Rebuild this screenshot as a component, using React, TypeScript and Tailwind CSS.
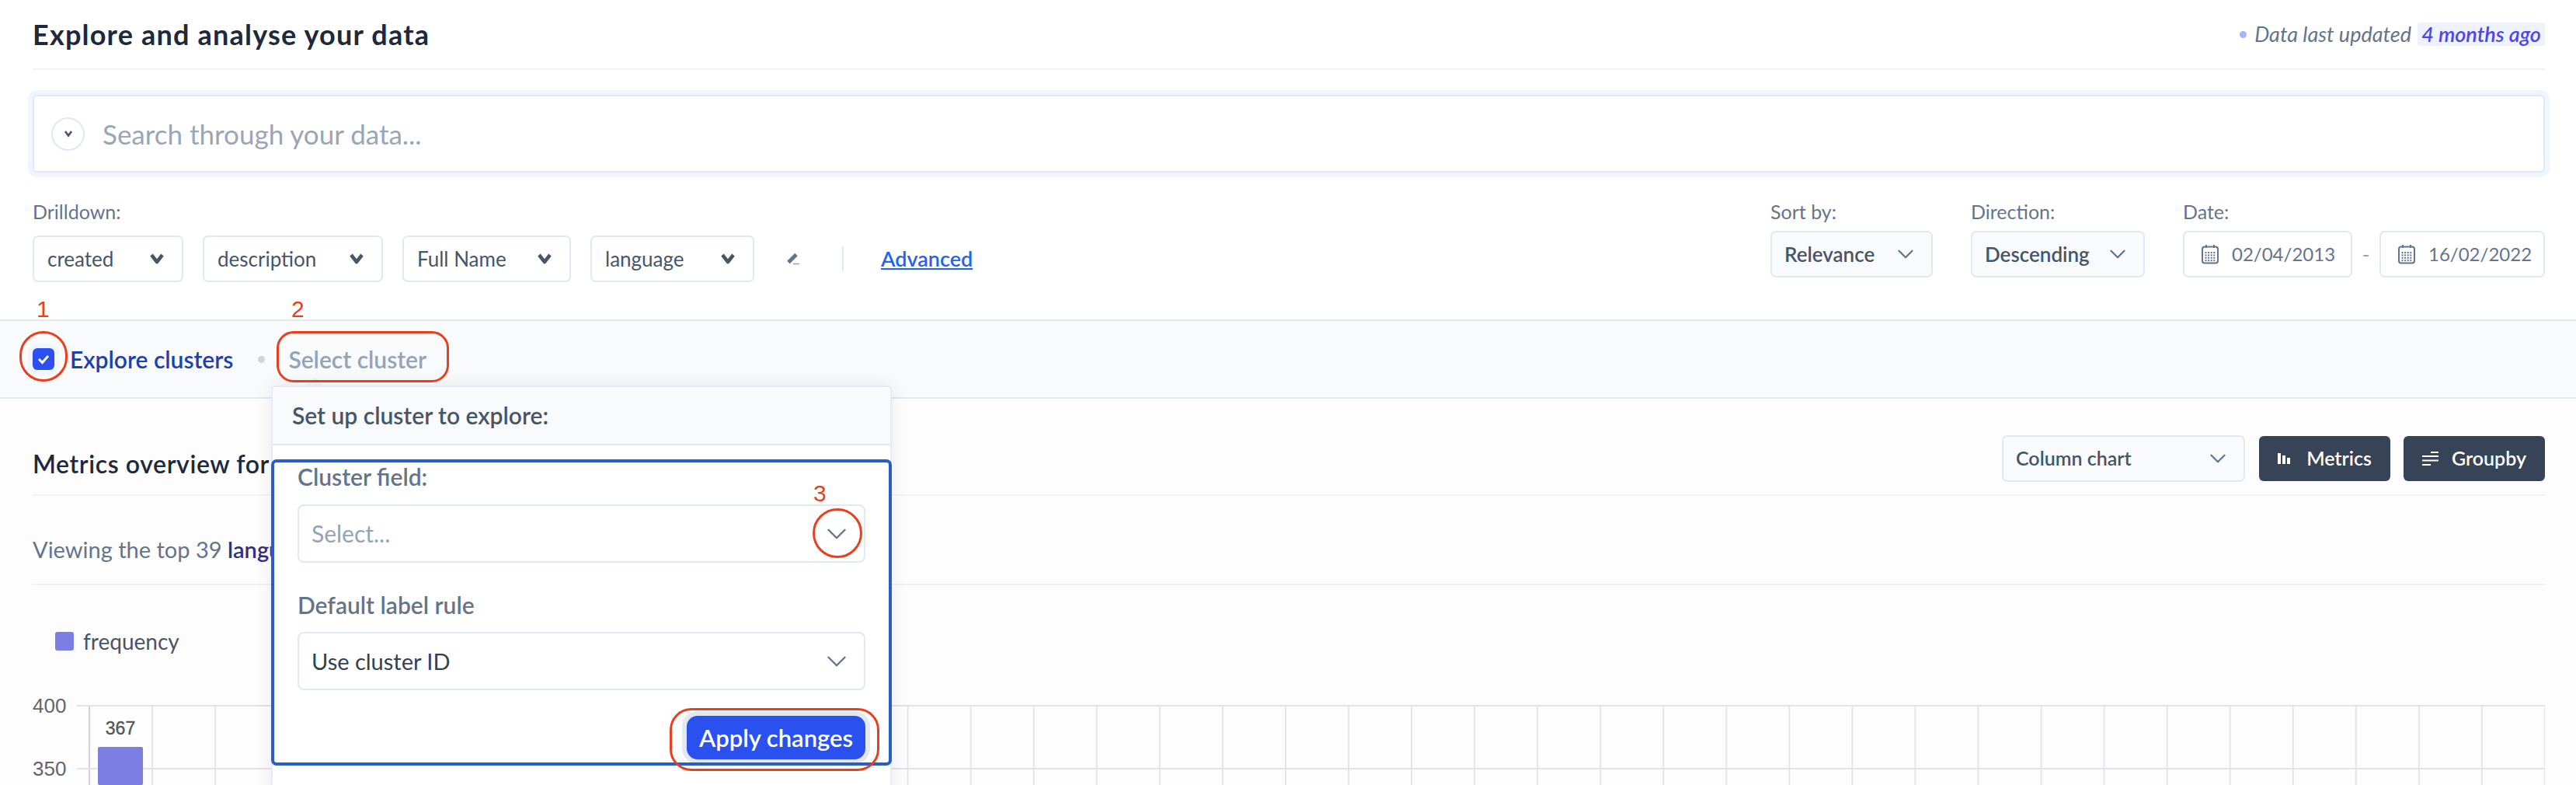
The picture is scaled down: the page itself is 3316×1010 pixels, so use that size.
import { ChevronDown } from 'lucide-react';

const DRILLDOWN = [
  { label: 'created', width: 'w-[194px]' },
  { label: 'description', width: 'w-[232px]' },
  { label: 'Full Name', width: 'w-[217px]' },
  { label: 'language', width: 'w-[211px]' },
];

function BoldChevron() {
  return (
    <svg width="20" height="16" viewBox="0 0 20 16" fill="none" className="shrink-0">
      <path d="M3 3 L10 12 L17 3" stroke="#475569" strokeWidth="4.5" strokeLinejoin="round" />
    </svg>
  );
}

function CalendarIcon() {
  const dots = [];
  for (let row = 0; row < 4; row++) {
    for (let col = 0; col < 4; col++) {
      dots.push(<rect key={`${row}-${col}`} x={5.5 + col * 3.6} y={10 + row * 3.4} width="2" height="2" fill="#64748b" />);
    }
  }
  return (
    <svg width="24" height="26" viewBox="0 0 24 26" fill="none" className="shrink-0">
      <rect x="2" y="3.5" width="20" height="21" rx="3" stroke="#64748b" strokeWidth="2" />
      <path d="M7 1 V5 M17 1 V5" stroke="#64748b" strokeWidth="2" />
      {dots}
    </svg>
  );
}

function DateBox({ value, width }: { value: string; width: string }) {
  return (
    <div className={`${width} h-[60px] flex items-center pl-[21px] gap-[16px] bg-white border-2 border-[#e2e8f0] rounded-[7px] text-[24px] text-[#64748b]`}>
      <CalendarIcon />
      <span>{value}</span>
    </div>
  );
}

function BarChart() {
  const verticals = Array.from({ length: 40 }, (_, i) => 73 + i * 81.05);
  return (
    <svg width="3234" height="150" viewBox="0 0 3234 150" className="block font-['Liberation_Sans',sans-serif]">
      {verticals.map((x, i) => (
        <line key={x} x1={x} y1="48" x2={x} y2="150" stroke={i === 0 ? '#cfd2d8' : '#e4e6ea'} strokeWidth="2" />
      ))}
      <line x1="57" y1="48" x2="3234" y2="48" stroke="#e1e3e8" strokeWidth="2" />
      <line x1="57" y1="129" x2="3234" y2="129" stroke="#e1e3e8" strokeWidth="2" />
      <text x="0" y="57" fontSize="26" fill="#666666">400</text>
      <text x="0" y="138" fontSize="26" fill="#666666">350</text>
      <rect x="84" y="101" width="58" height="49" rx="2" fill="#7c7ee3" />
      <text x="113" y="85" fontSize="23" stroke="#555555" strokeWidth="0.4" fill="#555555" textAnchor="middle">367</text>
    </svg>
  );
}

export default function App() {
  return (
    <div className="relative w-[3316px] h-[1010px] overflow-hidden bg-[#fdfdfe] font-['Lato',sans-serif]">
      <div className="bg-white">
        <div className="pl-[42px] pr-[40px]">
          <div className="h-[90px] flex items-center justify-between border-b-2 border-[#f1f3f7]">
            <h1 className="text-[36px] tracking-[1.2px] font-bold text-[#1e293b]">Explore and analyse your data</h1>
            <div className="flex items-center text-[27px] italic text-[#64748b]">
              <span className="w-[9px] h-[9px] mr-[10px] rounded-full bg-[#a5b4fc]" />
              <span>Data last updated</span>
              <span className="ml-[8px] w-[164px] h-[30px] flex items-center justify-center rounded-[3px] bg-[#eef2ff] font-semibold text-[#4f46e5]">4 months ago</span>
            </div>
          </div>

          <div className="mt-[32px] h-[100px] flex items-center pl-[22px] gap-[23px] bg-white border-2 border-[#e2e8f0] rounded-[6px] ring-[6px] ring-[#eff6ff]">
            <div className="w-[43px] h-[43px] flex items-center justify-center rounded-full border-2 border-[#e2e8f0]">
              <svg width="12" height="10" viewBox="0 0 12 10" fill="none">
                <path d="M2 2 L6 7.5 L10 2" stroke="#475569" strokeWidth="2.6" />
              </svg>
            </div>
            <span className="text-[35px] text-[#9aa5b8]">Search through your data...</span>
          </div>

          <div className="h-[189px] pt-[37px] flex justify-between items-start">
            <div>
              <div className="h-[26px] leading-[26px] text-[25px] text-[#64748b]">Drilldown:</div>
              <div className="mt-[18px] flex items-center">
                <div className="flex gap-[25px]">
                  {DRILLDOWN.map((item) => (
                    <div key={item.label} className={`${item.width} h-[60px] flex items-center justify-between pl-[17px] pr-[22px] bg-white border-2 border-[#e2e8f0] rounded-[7px] text-[26px] text-[#475569]`}>
                      <span>{item.label}</span>
                      <BoldChevron />
                    </div>
                  ))}
                </div>
                <svg width="18" height="18" viewBox="0 0 18 18" className="ml-[41px]">
                  <path d="M3 13.5 L13 3.5" stroke="#64748b" strokeWidth="5" />
                  <path d="M9 15.5 H17" stroke="#94a3b8" strokeWidth="1.6" />
                </svg>
                <div className="ml-[54px] w-[2px] h-[32px] bg-[#e2e8f0]" />
                <a className="ml-[48px] text-[27px] font-semibold text-[#2563eb] underline">Advanced</a>
              </div>
            </div>

            <div className="flex items-start">
              <div className="mr-[49px]">
                <div className="h-[26px] leading-[26px] text-[25px] text-[#64748b]">Sort by:</div>
                <div className="mt-[12px] w-[209px] h-[60px] flex items-center justify-between pl-[16px] pr-[16px] bg-[#f8fafc] border-2 border-[#e2e8f0] rounded-[7px] text-[26px] font-semibold text-[#475569]">
                  <span>Relevance</span>
                  <ChevronDown size={34} color="#64748b" strokeWidth={1.6} />
                </div>
              </div>
              <div className="mr-[49px]">
                <div className="h-[26px] leading-[26px] text-[25px] text-[#64748b]">Direction:</div>
                <div className="mt-[12px] w-[224px] h-[60px] flex items-center justify-between pl-[16px] pr-[16px] bg-[#f8fafc] border-2 border-[#e2e8f0] rounded-[7px] text-[26px] font-semibold text-[#475569]">
                  <span>Descending</span>
                  <ChevronDown size={34} color="#64748b" strokeWidth={1.6} />
                </div>
              </div>
              <div>
                <div className="h-[26px] leading-[26px] text-[25px] text-[#64748b]">Date:</div>
                <div className="mt-[12px] flex items-center">
                  <DateBox value="02/04/2013" width="w-[218px]" />
                  <span className="w-[35px] text-center text-[26px] text-[#94a3b8]">-</span>
                  <DateBox value="16/02/2022" width="w-[213px]" />
                </div>
              </div>
            </div>
          </div>
        </div>
      </div>

      <div className="h-[102px] pl-[42px] flex items-center bg-[#f8fafc] border-y-2 border-[#e2e8f0]">
        <div className="w-[28px] h-[28px] flex items-center justify-center rounded-[6px] bg-[#2b4ff0] ring-[6px] ring-[#eff6ff]">
          <svg width="18" height="16" viewBox="0 0 18 16" fill="none">
            <path d="M3 8 L7.5 12.5 L15 4" stroke="#ffffff" strokeWidth="3" />
          </svg>
        </div>
        <span className="ml-[20px] text-[30px] font-semibold text-[#1e40af]">Explore clusters</span>
        <span className="ml-[32px] w-[9px] h-[9px] rounded-full bg-[#cbd5e1]" />
        <span className="ml-[30px] text-[30px] font-semibold text-[#94a3b8]">Select cluster</span>
      </div>

      <div className="pl-[42px] pr-[40px]">
        <div className="h-[125px] pb-[16px] flex items-end justify-between border-b-2 border-[#f1f3f7]">
          <h2 className="h-[60px] pt-[12px] text-[32px] tracking-[0.6px] leading-[50px] font-semibold text-[#1e293b]">Metrics overview for</h2>
          <div className="flex items-center">
            <div className="w-[313px] h-[60px] mr-[18px] flex items-center justify-between pl-[16px] pr-[16px] bg-[#f8fafc] border-2 border-[#e2e8f0] rounded-[7px] text-[25px] font-semibold text-[#475569]">
              <span>Column chart</span>
              <ChevronDown size={34} color="#64748b" strokeWidth={1.6} />
            </div>
            <button className="w-[169px] h-[58px] mr-[17px] flex items-center justify-center gap-[21px] bg-[#374357] rounded-[6px] text-[25px] font-semibold text-white">
              <svg width="16" height="14" viewBox="0 0 16 14">
                <rect x="0" y="0" width="4" height="14" fill="#fff" />
                <rect x="6" y="3" width="4" height="11" fill="#fff" />
                <rect x="12" y="6" width="4" height="8" fill="#fff" />
              </svg>
              Metrics
            </button>
            <button className="w-[182px] h-[58px] flex items-center justify-center gap-[17px] bg-[#374357] rounded-[6px] text-[25px] font-semibold text-white">
              <svg width="21" height="18" viewBox="0 0 21 18">
                <path d="M11 1 H21 M0 6 H21 M0 11.5 H21 M0 17 H11" stroke="#fff" strokeWidth="2" />
              </svg>
              Groupby
            </button>
          </div>
        </div>

        <div className="h-[115px] pt-[24px] flex items-center border-b-2 border-[#f1f3f7] text-[29px] text-[#64748b]">
          <span>
            Viewing the top 39 <span className="font-semibold text-[#312e81]">language</span>
          </span>
        </div>

        <div className="mt-[60px] ml-[29px] h-[24px] flex items-center gap-[12px]">
          <span className="w-[24px] h-[24px] rounded-[3px] bg-[#7c7ee3]" />
          <span className="text-[28px] text-[#475569]">frequency</span>
        </div>

        <div className="mt-[23px]">
          <BarChart />
        </div>
      </div>

      {/* Popover over the page */}
      <div className="absolute left-[349px] top-[496px] w-[799px] h-[530px] bg-white border-2 border-[#e8ecf2] rounded-t-[6px] shadow-[0_0_24px_rgba(15,23,42,0.08)]">
        <div className="h-[75px] pl-[25px] flex items-center bg-[#f8fafc] border-b-2 border-[#e2e8f0] rounded-t-[6px] text-[30px] font-semibold text-[#475569]">
          Set up cluster to explore:
        </div>
        <div className="px-[32px]">
          <div className="mt-[24px] h-[32px] leading-[32px] text-[30px] font-semibold text-[#64748b]">Cluster field:</div>
          <div className="mt-[20px] h-[75px] pl-[16px] pr-[14px] flex items-center justify-between border-2 border-[#e2e8f0] rounded-[8px] text-[30px] text-[#94a3b8]">
            <span>Select...</span>
            <ChevronDown size={42} color="#64748b" strokeWidth={1.4} />
          </div>
          <div className="mt-[38px] h-[32px] leading-[32px] text-[30px] font-semibold text-[#64748b]">Default label rule</div>
          <div className="mt-[19px] h-[75px] pl-[16px] pr-[14px] flex items-center justify-between border-2 border-[#e2e8f0] rounded-[8px] text-[29px] text-[#334155]">
            <span>Use cluster ID</span>
            <ChevronDown size={42} color="#64748b" strokeWidth={1.4} />
          </div>
          <div className="mt-[33px] flex justify-end">
            <button className="w-[230px] h-[56px] rounded-[14px] bg-[#2b50f0] ring-[6px] ring-[#e2e8f0] text-[31px] font-semibold text-white">Apply changes</button>
          </div>
        </div>
      </div>
      <div className="absolute left-[393px] top-[486px] w-0 h-0 border-x-[12px] border-x-transparent border-b-[11px] border-b-[#e8ecf2]" />

      {/* Red and blue annotations drawn on top of the screenshot */}
      <div className="absolute left-[349px] top-[591px] w-[799px] h-[394px] border-4 border-[#2a5ec4] rounded-[7px]" />
      <div className="absolute left-[25px] top-[426px] w-[62px] h-[65px] border-[3px] border-[#e8401f] rounded-full" />
      <div className="absolute left-[356px] top-[426px] w-[222px] h-[66px] border-[3px] border-[#e8401f] rounded-[22px]" />
      <div className="absolute left-[1046px] top-[654px] w-[64px] h-[64px] border-[3px] border-[#e8401f] rounded-full" />
      <div className="absolute left-[862px] top-[911px] w-[270px] h-[81px] border-[3px] border-[#e8401f] rounded-[28px]" />
      <span className="absolute left-[47px] top-[383px] text-[30px] leading-[30px] text-[#e8401f] font-['Liberation_Sans',sans-serif]">1</span>
      <span className="absolute left-[375px] top-[383px] text-[30px] leading-[30px] text-[#e8401f] font-['Liberation_Sans',sans-serif]">2</span>
      <span className="absolute left-[1047px] top-[620px] text-[30px] leading-[30px] text-[#e8401f] font-['Liberation_Sans',sans-serif]">3</span>
    </div>
  );
}
